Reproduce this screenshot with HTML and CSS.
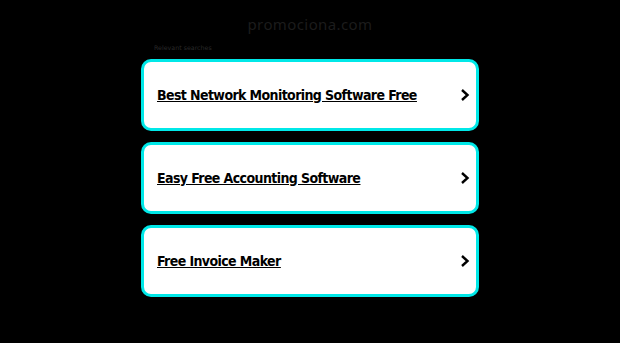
FILE: index.html
```html
<!DOCTYPE html>
<html lang="en">
<head>
    <meta charset="UTF-8">
    <meta name="viewport" content="width=device-width, initial-scale=1.0">
    <title>promociona.com</title>
    <link rel="stylesheet" href="styles.css">
</head>
<body>
    <div class="page">
        <div class="domain">promociona.com</div>
        <div class="results">
            <p class="label">Relevant searches</p>
            <a class="link-box" href="#">
                <span class="link-text">Best Network Monitoring Software Free</span>
                <svg class="chevron" viewBox="0 0 10 14" width="10" height="14"><path d="M2 2 L7.5 7 L2 12" fill="none" stroke="#000" stroke-width="2.4"/></svg>
            </a>
            <a class="link-box" href="#">
                <span class="link-text">Easy Free Accounting Software</span>
                <svg class="chevron" viewBox="0 0 10 14" width="10" height="14"><path d="M2 2 L7.5 7 L2 12" fill="none" stroke="#000" stroke-width="2.4"/></svg>
            </a>
            <a class="link-box" href="#">
                <span class="link-text">Free Invoice Maker</span>
                <svg class="chevron" viewBox="0 0 10 14" width="10" height="14"><path d="M2 2 L7.5 7 L2 12" fill="none" stroke="#000" stroke-width="2.4"/></svg>
            </a>
        </div>
    </div>
</body>
</html>
```
FILE: styles.css
```css
html, body {
    margin: 0;
    padding: 0;
    background-color: #000;
    font-family: "DejaVu Sans", Verdana, sans-serif;
}
.page {
    display: flex;
    flex-direction: column;
    align-items: center;
}
.domain {
    margin-top: 14px;
    font-family: "Noto Sans", sans-serif;
    font-size: 15px;
    letter-spacing: 0.4px;
    color: #1c1c1c;
    line-height: 20px;
}
.results {
    width: 338px;
    margin-top: 9px;
}
.label {
    margin: 0 0 7px 13px;
    font-size: 6.3px;
    line-height: 9px;
    color: #2a2a2a;
}
.link-box {
    display: flex;
    justify-content: space-between;
    align-items: center;
    height: 66px;
    margin-bottom: 11px;
    padding: 0 6px 0 13px;
    background: #fff;
    border: 3px solid #00e8e8;
    border-radius: 10px;
    color: #000;
}
.link-text {
    font-family: "DejaVu Sans Condensed", "DejaVu Sans", sans-serif;
    font-size: 14px;
    font-weight: bold;
    letter-spacing: -0.6px;
    text-decoration: underline;
}
.chevron {
    display: block;
}
```
